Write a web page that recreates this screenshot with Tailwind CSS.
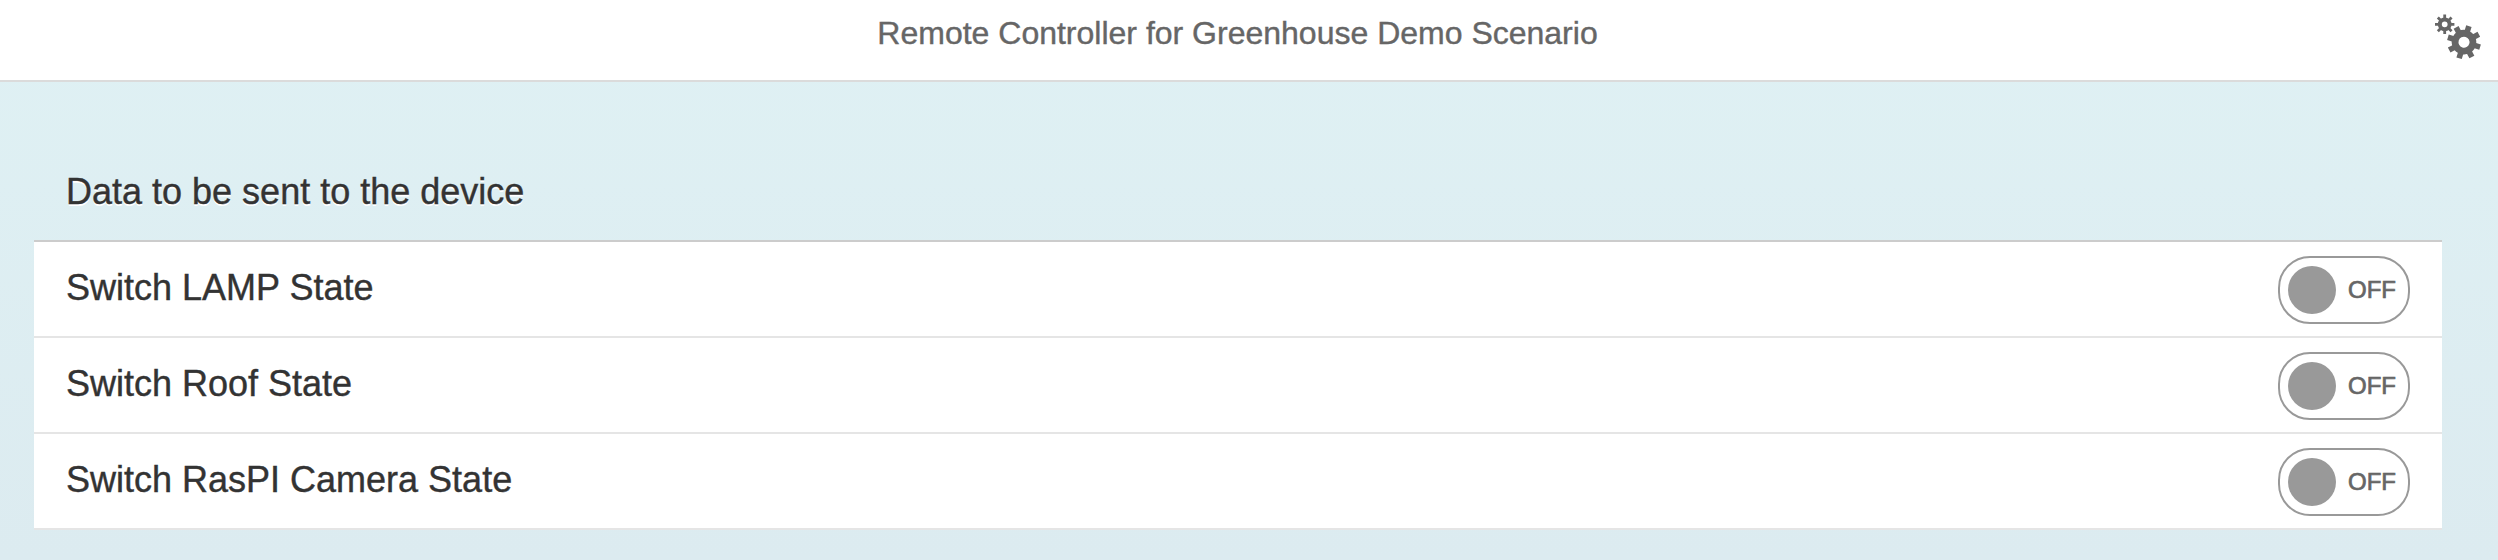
<!DOCTYPE html>
<html lang="en">
<head>
<meta charset="utf-8">
<title>Remote Controller for Greenhouse Demo Scenario</title>
<script src="https://cdn.jsdelivr.net/npm/@tailwindcss/browser@4"></script>
</head>
<body class="flex h-[560px] flex-col overflow-hidden bg-linear-to-b from-[#dff1f4] to-[#dcebf0] font-['Liberation_Sans',Arial,sans-serif] text-[#333333] [-webkit-text-stroke:0.4px_currentColor]">
<header class="grid h-[82px] shrink-0 grid-cols-[1fr_auto_1fr] border-b-2 border-[#dbdbdb] bg-white text-[#666666]">
  <h1 class="col-start-2 -ml-[23px] pt-[15px] text-[32px] leading-[37px]">Remote Controller for Greenhouse Demo Scenario</h1>
  <button class="mt-[10px] mr-[14px] h-[52px] w-[52px] justify-self-end" aria-label="Settings">
    <svg class="block" width="52" height="52" viewBox="0 0 52 52">
      <g transform="translate(12.7 14.3)" fill="none" stroke="#666">
        <circle r="4.9" stroke-width="4"/>
        <path stroke-width="2.8" d="M0-5.5V-9.7M0 5.5V9.7M-5.5 0H-9.7M5.5 0H9.7"/>
        <path stroke-width="2.8" transform="rotate(45)" d="M0-5.5V-9.7M0 5.5V9.7M-5.5 0H-9.7M5.5 0H9.7"/>
      </g>
      <g transform="translate(32 32.2) rotate(17)" fill="none" stroke="#666">
        <circle r="8.9" stroke-width="6.8"/>
        <path stroke-width="5.6" d="M0-11V-16.8M0 11V16.8M-11 0H-16.8M11 0H16.8"/>
        <path stroke-width="5.6" transform="rotate(45)" d="M0-11V-16.8M0 11V16.8M-11 0H-16.8M11 0H16.8"/>
      </g>
    </svg>
  </button>
</header>
<main class="mr-[56px] ml-[34px]">
  <h2 class="h-[158px] pt-[89px] pl-8 text-[36px] leading-[41px] text-shadow-[0_2px_0_#ffffff]">Data to be sent to the device</h2>
  <ul class="border-t-2 border-[#cccccc] bg-white">
    <li class="flex h-24 items-start justify-between border-b-2 border-[#e5e5e5] pr-8 pl-8">
      <span class="pt-[25px] text-[36px] leading-[41px]">Switch LAMP State</span>
      <button class="mt-[14px] flex h-[68px] w-[132px] items-center rounded-[32px] border-2 border-[#999999] pl-2">
        <span class="size-12 rounded-full bg-[#999999]"></span>
        <span class="ml-3 text-[24px] leading-[28px] text-[#666666] [-webkit-text-stroke:0.7px_currentColor]">OFF</span>
      </button>
    </li>
    <li class="flex h-24 items-start justify-between border-b-2 border-[#e5e5e5] pr-8 pl-8">
      <span class="pt-[25px] text-[36px] leading-[41px]">Switch Roof State</span>
      <button class="mt-[14px] flex h-[68px] w-[132px] items-center rounded-[32px] border-2 border-[#999999] pl-2">
        <span class="size-12 rounded-full bg-[#999999]"></span>
        <span class="ml-3 text-[24px] leading-[28px] text-[#666666] [-webkit-text-stroke:0.7px_currentColor]">OFF</span>
      </button>
    </li>
    <li class="flex h-24 items-start justify-between border-b-2 border-[#e5e5e5] pr-8 pl-8">
      <span class="pt-[25px] text-[36px] leading-[41px]">Switch RasPI Camera State</span>
      <button class="mt-[14px] flex h-[68px] w-[132px] items-center rounded-[32px] border-2 border-[#999999] pl-2">
        <span class="size-12 rounded-full bg-[#999999]"></span>
        <span class="ml-3 text-[24px] leading-[28px] text-[#666666] [-webkit-text-stroke:0.7px_currentColor]">OFF</span>
      </button>
    </li>
  </ul>
</main>
</body>
</html>
